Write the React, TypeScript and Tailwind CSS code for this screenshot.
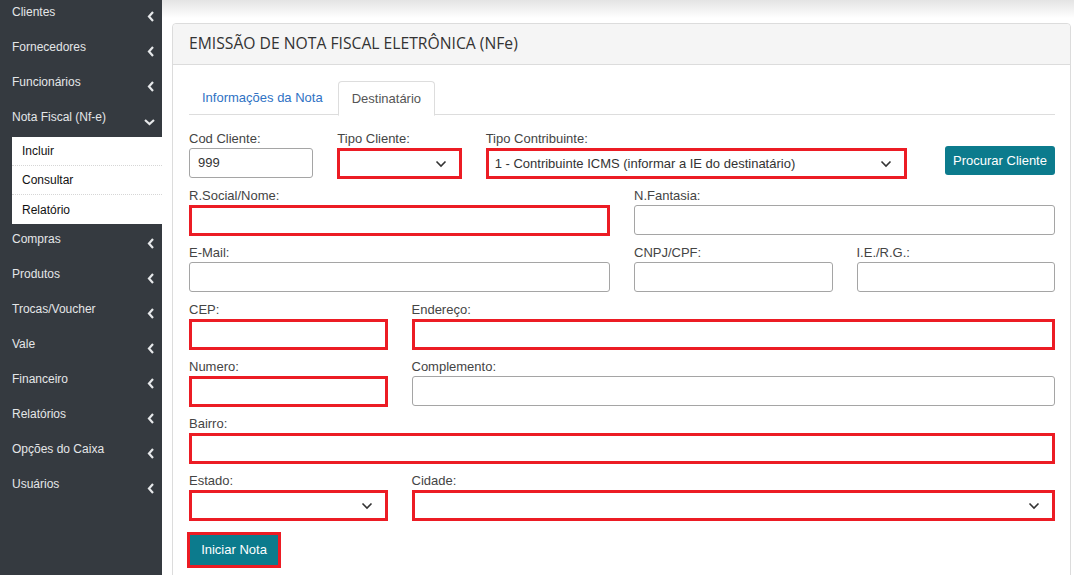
import React from "react";

const RED = "border-[3px] border-[#ec1c24]";

function ChevronLeft() {
  return (
    <svg width="8" height="11" viewBox="0 0 8 11" className="mt-[6px]">
      <polyline points="6,1 2,5.5 6,10" fill="none" stroke="#e6e8ea" strokeWidth="2.2" />
    </svg>
  );
}
function ChevronDown() {
  return (
    <svg width="11" height="8" viewBox="0 0 11 8" className="mt-[8px]">
      <polyline points="1,2 5.5,6 10,2" fill="none" stroke="#e6e8ea" strokeWidth="2.2" />
    </svg>
  );
}
function SelectChevron() {
  return (
    <svg width="12" height="8" viewBox="0 0 12 8">
      <polyline points="1.5,1.5 6,6 10.5,1.5" fill="none" stroke="#333" strokeWidth="1.6" />
    </svg>
  );
}

const menuTop = ["Clientes", "Fornecedores", "Funcionários"];
const menuBottom = ["Compras", "Produtos", "Trocas/Voucher", "Vale", "Financeiro", "Relatórios", "Opções do Caixa", "Usuários"];

function MenuRow({ label, open }: { label: string; open?: boolean }) {
  return (
    <div className="h-[35px] flex items-start justify-between pt-[8px] pl-[12px] pr-[7px]">
      <span className="text-[12px] leading-[14px] text-[#e4e6e8]">{label}</span>
      {open ? <ChevronDown /> : <ChevronLeft />}
    </div>
  );
}

function Field({
  label,
  span,
  red,
  select,
  value,
}: {
  label: string;
  span: string;
  red?: boolean;
  select?: boolean;
  value?: string;
}) {
  return (
    <div className={span + " flex flex-col"}>
      <label className="text-[13px] leading-[17px] h-[17px] text-[#444] mb-[1px] whitespace-nowrap">{label}</label>
      <div
        className={
          "bg-white flex items-center justify-between text-[13px] text-[#333] " +
          (red ? RED + " h-[31px] -mb-[1px] px-[6px]" : "h-[30px] px-[8px] border border-[#a5a5a5] rounded-[3px]")
        }
      >
        <span className="whitespace-nowrap">{value ?? ""}</span>
        {select && (
          <span className="pr-[6px] flex items-center">
            <SelectChevron />
          </span>
        )}
      </div>
    </div>
  );
}

export default function App() {
  return (
    <div className="flex w-[1074px] h-[575px] overflow-hidden bg-white font-['Liberation_Sans',Arial,sans-serif]">
      <aside className="w-[162px] shrink-0 h-full bg-[#353a40]">
        <div className="mt-[-3px]">
          {menuTop.map((m) => (
            <MenuRow key={m} label={m} />
          ))}
          <MenuRow label="Nota Fiscal (Nf-e)" open />
          <div className="ml-[12px] bg-white">
            {["Incluir", "Consultar", "Relatório"].map((s, i) => (
              <div
                key={s}
                className={
                  "h-[29px] flex items-center pl-[10px] text-[12px] text-[#111] " +
                  (i < 2 ? "border-b border-dotted border-[#d6d6d6]" : "")
                }
              >
                {s}
              </div>
            ))}
          </div>
          {menuBottom.map((m) => (
            <MenuRow key={m} label={m} />
          ))}
        </div>
      </aside>

      <main className="flex-1 flex flex-col pl-[10px] pr-[3px]">
        <div className="-ml-[10px] -mr-[3px] h-[18px] shrink-0 bg-gradient-to-b from-[#e4e4e4] to-white" />
        <div className="mt-[5px] shrink-0 h-[620px] border border-[#dcdcdc] rounded-t-[4px] flex flex-col">
          <div className="h-[40px] bg-[#f5f5f5] border-b border-[#dcdcdc] rounded-t-[4px] flex items-center pl-[16px] box-content">
            <span className="text-[15.7px] text-[#333] font-['Open_Sans',sans-serif]">
              EMISSÃO DE NOTA FISCAL ELETRÔNICA (NFe)
            </span>
          </div>
          <div className="pl-[16px] pr-[15px] pt-[16px]">
            <div className="flex border-b border-[#dddddd] h-[34px]">
              <div className="px-[13px] mr-[2px] flex items-center text-[13px] text-[#2f72c4]">Informações da Nota</div>
              <div className="px-[13px] h-[35px] flex items-center text-[13px] text-[#555] bg-white border border-[#dddddd] border-b-white rounded-t-[4px]">
                Destinatário
              </div>
            </div>

            <div className="mt-[15px] grid grid-cols-12 gap-x-6 gap-y-[9px]">
              <Field label="Cod Cliente:" span="col-span-2" value="999" />
              <Field label="Tipo Cliente:" span="col-span-2" red select />
              <Field
                label="Tipo Contribuinte:"
                span="col-span-6"
                red
                select
                value="1 - Contribuinte ICMS (informar a IE do destinatário)"
              />
              <div className="col-span-2 flex justify-end items-start pt-[16px]">
                <button className="h-[29px] w-[110px] rounded-[3px] bg-[#0c7b8d] text-white text-[13px]">
                  Procurar Cliente
                </button>
              </div>

              <Field label="R.Social/Nome:" span="col-span-6" red />
              <Field label="N.Fantasia:" span="col-span-6" />

              <Field label="E-Mail:" span="col-span-6" />
              <Field label="CNPJ/CPF:" span="col-span-3" />
              <Field label="I.E./R.G.:" span="col-span-3" />

              <Field label="CEP:" span="col-span-3" red />
              <Field label="Endereço:" span="col-span-9" red />

              <Field label="Numero:" span="col-span-3" red />
              <Field label="Complemento:" span="col-span-9" />

              <Field label="Bairro:" span="col-span-12" red />

              <Field label="Estado:" span="col-span-3" red select />
              <Field label="Cidade:" span="col-span-9" red select />
            </div>

            <div className={"mt-[12px] -ml-[2px] w-[94px] h-[36px] " + RED}>
              <button className="w-full h-full bg-[#0c7b8d] text-white text-[13px]">Iniciar Nota</button>
            </div>
          </div>
        </div>
      </main>
    </div>
  );
}
